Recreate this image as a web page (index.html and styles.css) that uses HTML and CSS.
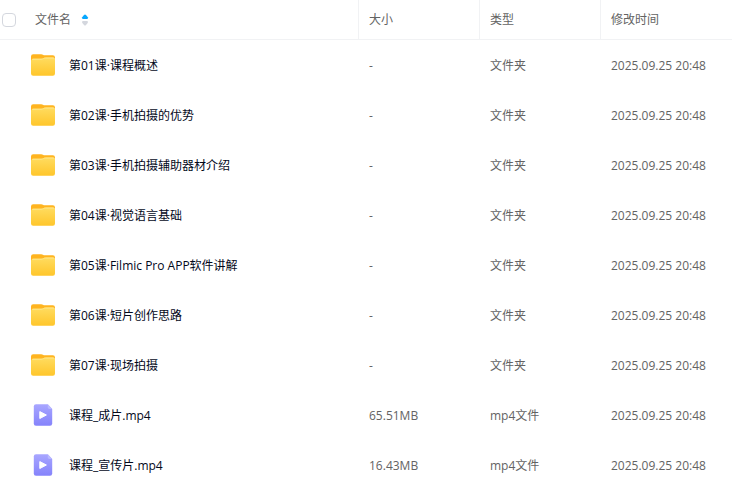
FILE: index.html
```html
<!DOCTYPE html>
<html lang="zh-CN">
<head>
    <meta charset="UTF-8">
    <meta name="viewport" content="width=device-width, initial-scale=1.0">
    <title>文件列表</title>
    <link rel="stylesheet" href="styles.css">
</head>
<body>
    <svg class="sprite" aria-hidden="true">
        <defs>
            <linearGradient id="folderFront" x1="0" y1="0" x2="0" y2="1">
                <stop offset="0" stop-color="#ffdc60"/>
                <stop offset="1" stop-color="#ffc62b"/>
            </linearGradient>
            <linearGradient id="videoBg" x1="0" y1="0" x2="0" y2="1">
                <stop offset="0" stop-color="#a8a6ff"/>
                <stop offset="1" stop-color="#8583fb"/>
            </linearGradient>
        </defs>
        <symbol id="folder" viewBox="0 1 26 26">
            <path d="M1 4.500Q1 2.300 3.200 2.300H11.200Q12.200 2.300 13 2.800L13.800 3.300H22.800Q25 3.300 25 5.500V12H1Z" fill="#ffb41f"/>
            <path d="M1 9Q1 7 3 6.800H11Q12.400 6.800 13.400 6.200Q14.300 5.500 15.500 5.500H23Q25 5.500 25 7.500V21.500Q25 23.700 22.800 23.700H3.200Q1 23.700 1 21.500Z" fill="url(#folderFront)"/>
            <path d="M2 7.500Q2.500 7.200 3 7.200H11Q12.400 7.200 13.400 6.600Q14.300 6 15.500 6H23Q24 6 24.500 6.800" fill="none" stroke="#ffe78c" stroke-width="1"/>
        </symbol>
        <symbol id="video" viewBox="0 1 26 26">
            <path d="M6 2.300H17.800L22.200 7V21.500Q22.200 23.700 20 23.700H6Q3.800 23.700 3.800 21.500V4.500Q3.800 2.300 6 2.300Z" fill="url(#videoBg)"/>
            <path d="M17.800 2.300L22.200 7H19.500Q17.800 7 17.800 5.300Z" fill="#b9b8ff"/>
            <path d="M9.800 9.600L16.400 13L9.800 16.500Z" fill="#fff" stroke="#fff" stroke-width="1" stroke-linejoin="round"/>
        </symbol>
    </svg>

    <table class="file-list">
        <colgroup>
            <col class="col-name">
            <col class="col-size">
            <col class="col-type">
            <col class="col-time">
        </colgroup>
        <thead>
            <tr>
                <th class="head-name">
                    <div class="head-box">
                        <input type="checkbox" class="check" aria-label="全选">
                        <button type="button" class="sort">
                            文件名
                            <svg class="caret" viewBox="0 0 8 12" aria-hidden="true">
                                <path d="M4 0.500Q4.500 0.500 5 1L6.800 3.300Q7.500 5 6 5H2Q0.500 5 1.200 3.300L3 1Q3.500 0.500 4 0.500Z" fill="#06a7ff"/>
                                <path d="M4 11.500Q4.500 11.500 5 11L6.800 8.700Q7.500 7 6 7H2Q0.500 7 1.200 8.700L3 11Q3.500 11.500 4 11.500Z" fill="#d4d7de"/>
                            </svg>
                        </button>
                    </div>
                </th>
                <th>大小</th>
                <th>类型</th>
                <th>修改时间</th>
            </tr>
        </thead>
        <tbody>
            <tr>
                <td><a href="#" class="name"><svg class="icon"><use href="#folder"/></svg>第01课·课程概述</a></td>
                <td>-</td>
                <td>文件夹</td>
                <td>2025.09.25 20:48</td>
            </tr>
            <tr>
                <td><a href="#" class="name"><svg class="icon"><use href="#folder"/></svg>第02课·手机拍摄的优势</a></td>
                <td>-</td>
                <td>文件夹</td>
                <td>2025.09.25 20:48</td>
            </tr>
            <tr>
                <td><a href="#" class="name"><svg class="icon"><use href="#folder"/></svg>第03课·手机拍摄辅助器材介绍</a></td>
                <td>-</td>
                <td>文件夹</td>
                <td>2025.09.25 20:48</td>
            </tr>
            <tr>
                <td><a href="#" class="name"><svg class="icon"><use href="#folder"/></svg>第04课·视觉语言基础</a></td>
                <td>-</td>
                <td>文件夹</td>
                <td>2025.09.25 20:48</td>
            </tr>
            <tr>
                <td><a href="#" class="name"><svg class="icon"><use href="#folder"/></svg>第05课·Filmic Pro APP软件讲解</a></td>
                <td>-</td>
                <td>文件夹</td>
                <td>2025.09.25 20:48</td>
            </tr>
            <tr>
                <td><a href="#" class="name"><svg class="icon"><use href="#folder"/></svg>第06课·短片创作思路</a></td>
                <td>-</td>
                <td>文件夹</td>
                <td>2025.09.25 20:48</td>
            </tr>
            <tr>
                <td><a href="#" class="name"><svg class="icon"><use href="#folder"/></svg>第07课·现场拍摄</a></td>
                <td>-</td>
                <td>文件夹</td>
                <td>2025.09.25 20:48</td>
            </tr>
            <tr>
                <td><a href="#" class="name"><svg class="icon"><use href="#video"/></svg>课程_成片.mp4</a></td>
                <td>65.51MB</td>
                <td>mp4文件</td>
                <td>2025.09.25 20:48</td>
            </tr>
            <tr>
                <td><a href="#" class="name"><svg class="icon"><use href="#video"/></svg>课程_宣传片.mp4</a></td>
                <td>16.43MB</td>
                <td>mp4文件</td>
                <td>2025.09.25 20:48</td>
            </tr>
        </tbody>
    </table>
</body>
</html>
```
FILE: styles.css
```css
body {
    margin: 0;
    font: 12px/18px "Open Sans", "Noto Sans CJK SC", sans-serif;
    color: #636363;
    background: #fff;
}
.sprite {
    position: absolute;
    width: 0;
    height: 0;
}
.file-list {
    width: 100%;
    table-layout: fixed;
    border-collapse: separate;
    border-spacing: 0;
}
.col-size,
.col-type {
    width: 121px;
}
.col-time {
    width: 131px;
}
/* 表头 */
.file-list th {
    box-sizing: border-box;
    height: 40px;
    padding: 0 10px;
    border-bottom: 1px solid #f1f2f4;
    border-right: 1px solid #f1f2f4;
    font-weight: normal;
    text-align: left;
}
.file-list th:last-child {
    border-right: 0;
}
.file-list .head-name {
    padding: 0 2px;
}
.head-box {
    display: flex;
    align-items: center;
    gap: 19px;
}
.check {
    appearance: none;
    box-sizing: border-box;
    width: 14px;
    height: 14px;
    margin: 0;
    border: 1px solid #d4d7de;
    border-radius: 4px;
    background: #fff;
}
.check:checked {
    border-color: #06a7ff;
    background: #06a7ff;
}
.sort {
    display: flex;
    align-items: center;
    gap: 10px;
    padding: 0;
    border: 0;
    background: none;
    font: inherit;
    color: inherit;
    cursor: pointer;
}
.caret {
    width: 8px;
    height: 12px;
}
/* 文件行 */
.file-list td {
    box-sizing: border-box;
    height: 50px;
    padding: 2px 10px 0;
    white-space: nowrap;
}
.file-list td:first-child {
    padding-left: 30px;
}
.name {
    display: flex;
    align-items: center;
    gap: 13px;
    color: #03081a;
    text-decoration: none;
}
.name:hover {
    color: #06a7ff;
}
.icon {
    flex: none;
    width: 26px;
    height: 26px;
}
```
